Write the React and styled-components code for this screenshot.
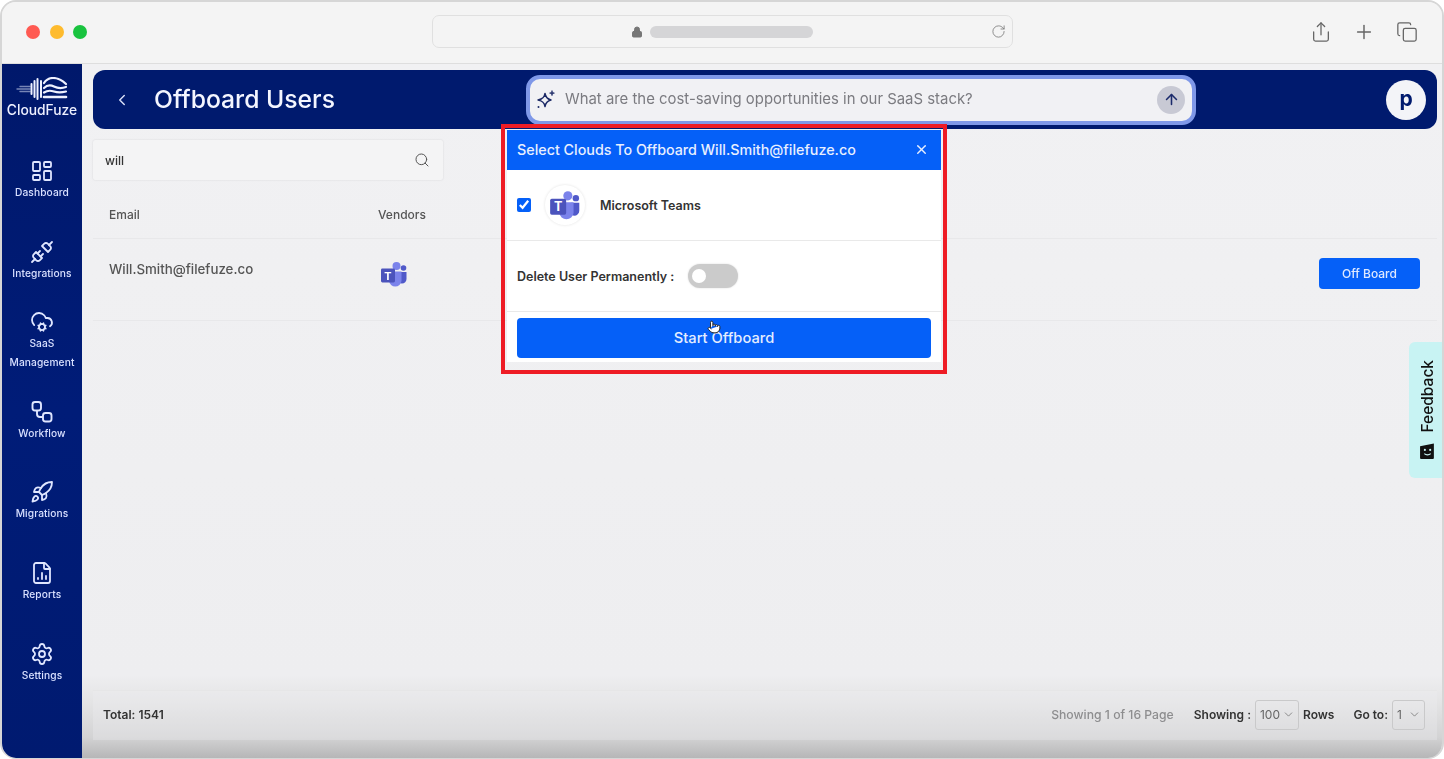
import React from 'react';
import styled, { createGlobalStyle } from 'styled-components';
import {
  ChevronLeft, ChevronDown, Search, X, ArrowUp, Lock, RotateCw, Share, Plus, Copy,
  LayoutDashboard, Unplug, CloudCog, Rocket, FileChartColumn, Settings, Pointer,
} from 'lucide-react';

const Global = createGlobalStyle`
  html, body { margin: 0; padding: 0; background: #fff; }
  * { box-sizing: border-box; }
  body { font-family: Inter, "Noto Sans", "Liberation Sans", sans-serif; }
`;

const Frame = styled.div`
  position: relative;
  width: 1444px;
  height: 759px;
  border: 2px solid #d6d6d6;
  border-bottom-width: 1px;
  border-radius: 16px;
  overflow: hidden;
  display: flex;
  flex-direction: column;
  background: #f3f3f4;
  filter: blur(0.35px);
`;

const Toolbar = styled.header`
  height: 62px;
  flex: none;
  display: flex;
  align-items: center;
  padding: 0 24px 2px 24px;
  background: #f4f4f4;
  border-bottom: 1px solid #dedede;
`;
const Lights = styled.div`
  display: flex;
  gap: 9.5px;
  width: 406px;
`;
const Light = styled.span`
  width: 14px;
  height: 14px;
  border-radius: 50%;
  background: ${p => p.$c};
`;
const Address = styled.div`
  width: 581px;
  height: 33px;
  border: 1px solid #e0e0e0;
  border-radius: 7px;
  background: #f4f4f4;
  display: flex;
  align-items: center;
  padding: 0 6px 0 198px;
  color: #777;
`;
const Skeleton = styled.span`
  width: 163px;
  height: 12px;
  margin-left: 7px;
  border-radius: 6px;
  background: #d5d5d7;
`;
const Reload = styled.span`
  margin-left: auto;
  display: flex;
  color: #777;
`;
const ToolIcons = styled.div`
  margin-left: auto;
  display: flex;
  align-items: center;
  gap: 21px;
  color: #666;
`;

const Body = styled.div`
  position: relative;
  flex: 1;
  min-height: 0;
  display: flex;
`;

const Sidebar = styled.nav`
  width: 80px;
  flex: none;
  background: linear-gradient(#00186b, #001c78 50%, #001a70);
  display: flex;
  flex-direction: column;
  align-items: center;
  padding-top: 13px;
  color: #dfe6ff;
`;
const Logo = styled.div`
  height: 82px;
  display: flex;
  flex-direction: column;
  align-items: center;
  color: #fff;
`;
const LogoText = styled.span`
  font-size: 13.8px;
  font-weight: 500;
  line-height: 16px;
  margin-top: 1px;
  color: #eef1ff;
  white-space: nowrap;
`;
const NavItem = styled.a`
  height: ${p => p.$h}px;
  flex: none;
  width: 100%;
  display: flex;
  flex-direction: column;
  align-items: center;
`;
const NavLabel = styled.span`
  font-size: 10.2px;
  font-weight: 500;
  line-height: 19px;
  text-align: center;
  white-space: pre-line;
  letter-spacing: 0.1px;
  color: #d8e0ff;
`;

const Main = styled.main`
  flex: 1;
  min-width: 0;
  display: flex;
  flex-direction: column;
  padding: 6px 5px 18px 11px;
  background: linear-gradient(#f1f1f3, #eeeef0 88%, #e4e4e5 92%, #d3d3d4 97%, #b6b6b7 100%);
`;
const Header = styled.div`
  height: 59px;
  flex: none;
  border-radius: 12px;
  background: #001a6e;
  display: flex;
  align-items: center;
  padding: 0 11px 0 20px;
  color: #fff;
`;
const BackIcon = styled.span`
  display: flex;
  color: #d5dcf5;
  width: 41px;
`;
const Title = styled.h1`
  margin: -2px 0 0;
  width: 372px;
  font-size: 24.7px;
  font-weight: 500;
  white-space: nowrap;
  color: #f4f6ff;
`;
const Ask = styled.div`
  width: 670px;
  height: 50px;
  border: 4px solid #7f98e8;
  border-radius: 14px;
  background: #f1f1f4;
  display: flex;
  align-items: center;
  padding: 0 7px 0 5px;
  gap: 8px;
`;
const AskText = styled.span`
  margin-top: -2px;
  font-size: 14.9px;
  color: #7b7b80;
  white-space: nowrap;
`;
const AskSend = styled.span`
  margin-left: auto;
  width: 28px;
  height: 28px;
  border-radius: 50%;
  background: #c8c9d4;
  color: #1b2a6b;
  display: flex;
  align-items: center;
  justify-content: center;
`;
const Avatar = styled.span`
  margin-left: auto;
  width: 40px;
  height: 40px;
  border-radius: 50%;
  background: #f3f4f8;
  color: #001a6e;
  font-size: 21px;
  font-weight: 700;
  display: flex;
  align-items: center;
  justify-content: center;
  padding-bottom: 2px;
`;

const SearchBox = styled.div`
  margin-top: 11px;
  width: 350px;
  height: 40px;
  flex: none;
  background: #f4f4f5;
  border-radius: 2px;
  box-shadow: 0 0 2px rgba(0, 0, 0, 0.12);
  display: flex;
  align-items: center;
  justify-content: space-between;
  padding: 0 13px 0 12px;
  font-size: 12px;
  font-weight: 500;
  color: #333;
`;
const Table = styled.section`
  margin-top: 12px;
  flex: 1;
  min-height: 0;
  display: flex;
  flex-direction: column;
`;
const Row = styled.div`
  height: ${p => p.$h}px;
  flex: none;
  display: grid;
  grid-template-columns: 269px 1fr auto;
  align-items: ${p => p.$top ? 'start' : 'center'};
  padding: ${p => p.$top ? '20px 17px 0 16px' : '0 17px 2px 16px'};
  border-bottom: 1px solid #e8e8ea;
`;
const HeadCell = styled.span`
  font-size: 12px;
  font-weight: 500;
  color: #555;
`;
const EmailCell = styled.span`
  font-size: 13.3px;
  font-weight: 500;
  color: #555;
  line-height: 20px;
`;
const TeamsCell = styled.span`
  display: flex;
  margin: 1px 0 0 2px;
`;
const OffBoard = styled.button`
  width: 101px;
  height: 31px;
  margin-top: -1px;
  border: 0;
  border-radius: 4px;
  background: #0560f8;
  color: #dfe9ff;
  font: 500 12px Inter, sans-serif;
`;
const Spacer = styled.div`
  flex: 1;
`;
const Footer = styled.footer`
  height: 50px;
  flex: none;
  display: flex;
  align-items: center;
  padding: 0 8px 2px 10px;
  background: rgba(240, 240, 241, 0.3);
  border-top: 1px solid #e6e6e7;
  font-size: 12px;
  font-weight: 600;
  color: #333;
`;
const Pager = styled.div`
  margin-left: auto;
  display: flex;
  align-items: center;
`;
const PageInfo = styled.span`
  font-size: 12.2px;
  font-weight: 500;
  color: #8d8d8f;
  margin-right: 20px;
`;
const Select = styled.span`
  width: ${p => p.$w}px;
  height: 30px;
  margin: 0 4px;
  border: 1px solid #c9c9ca;
  border-radius: 3px;
  display: flex;
  align-items: center;
  justify-content: space-between;
  padding: 0 3px 0 4px;
  font-weight: 400;
  color: #666;
`;
const GoTo = styled.span`
  margin-left: 19px;
`;

const Callout = styled.div`
  position: absolute;
  left: 499px;
  top: 60px;
  width: 446px;
  height: 250px;
  border: 4px solid #ee1c25;
  padding: 2px;
`;
const Modal = styled.div`
  width: 434px;
  height: 232px;
  background: #fff;
  display: flex;
  flex-direction: column;
`;
const ModalHead = styled.div`
  height: 40px;
  flex: none;
  background: #0560f8;
  color: #e8efff;
  display: flex;
  align-items: center;
  justify-content: space-between;
  padding: 0 12px 2px 10px;
  font-size: 14.3px;
  font-weight: 500;
`;
const CloudRow = styled.div`
  height: 71px;
  flex: none;
  display: flex;
  align-items: center;
  padding: 0 10px;
  border-bottom: 1px solid #e9e9e9;
  font-size: 12.5px;
  font-weight: 600;
  color: #333;
`;
const Check = styled.input`
  width: 14px;
  height: 14px;
  margin: 0 14px 0 0;
  accent-color: #0560f8;
`;
const LogoCircle = styled.span`
  width: 40px;
  height: 40px;
  border-radius: 50%;
  box-shadow: 0 0 3px rgba(0, 0, 0, 0.12);
  display: flex;
  align-items: center;
  justify-content: center;
  margin-right: 15px;
`;
const DeleteLabel = styled.span`
  width: 171px;
  white-space: nowrap;
`;
const Toggle = styled.span`
  width: 50px;
  height: 24px;
  border-radius: 12px;
  background: #cbcbcb;
  box-shadow: 0 0 2px rgba(0, 0, 0, 0.15);
  display: flex;
  align-items: center;
  padding-left: 4px;
`;
const Knob = styled.span`
  width: 14px;
  height: 14px;
  border-radius: 50%;
  background: #fff;
`;
const StartWrap = styled.div`
  padding: 6px 10px 0;
`;
const Start = styled.button`
  width: 100%;
  height: 40px;
  border: 0;
  border-radius: 4px;
  background: #0560f8;
  color: #e4edff;
  font: 500 14.7px Inter, sans-serif;
`;
const Cursor = styled.span`
  position: absolute;
  left: 202px;
  top: 192px;
  display: flex;
  color: #222;
`;
const FeedbackTab = styled.div`
  position: absolute;
  right: 0;
  top: 278px;
  width: 33px;
  height: 136px;
  padding-left: 3px;
  background: #c8f3f3;
  border-radius: 6px 0 0 6px;
  display: flex;
  flex-direction: column-reverse;
  align-items: center;
  justify-content: center;
  gap: 10px;
  color: #111;
`;
const FeedbackText = styled.span`
  writing-mode: vertical-rl;
  transform: rotate(180deg);
  font: 500 15.5px Inter, sans-serif;
`;

const TeamsIcon = ({ size = 28 }) => (
  <svg width={size} height={size} viewBox="0 0 28 28">
    <circle cx="16.5" cy="6" r="4" fill="#7b83eb" />
    <circle cx="23.5" cy="8" r="2.8" fill="#5059c9" />
    <path d="M19 12h7.5v7a4.5 4.5 0 0 1-4.5 4.5 4 4 0 0 1-3-1.3z" fill="#5059c9" />
    <path d="M9 11.5h12.5V21a6.3 6.3 0 0 1-12.5 0z" fill="#7b83eb" />
    <rect x="1" y="8.5" width="14" height="14" rx="1.4" fill="#4b53bc" />
    <text x="8" y="19.5" textAnchor="middle" fontSize="11" fontWeight="700" fill="#fff" fontFamily="Inter, sans-serif">T</text>
  </svg>
);

const LogoMark = () => (
  <svg width="52" height="24" viewBox="0 0 52 24" fill="none" stroke="#eef1ff" strokeLinecap="round">
    <path d="M1 12h13M4 9.5h10M4 14.5h10" strokeWidth="1.4" opacity=".5" />
    <path d="M15.5 7v10M18.5 4v16M21.5 2v20M25 4v16" strokeWidth="2" />
    <path d="M28 6c2-3 5-5 9-5 4 0 9 2 13 6" strokeWidth="2.2" />
    <path d="M28 11c3-3 7-3 10-1.5s8 2 12 .5" strokeWidth="2.2" />
    <path d="M28 15.5c3-2 7-2 10-1s8 1 12 0" strokeWidth="2.2" />
    <path d="M28 20h22" strokeWidth="2.6" />
  </svg>
);

const Sparkle = () => (
  <svg width="22" height="22" viewBox="0 0 22 22" fill="none" stroke="#1d2a66" strokeWidth="1.5" strokeLinejoin="round">
    <path d="M10 4.5c.7 4 2.2 5.6 6 6.5-3.8.9-5.3 2.5-6 6.5-.7-4-2.2-5.6-7-6.5 4.8-.9 6.3-2.5 7-6.5z" />
    <path d="M17 1.5l.6 2 1.9.6-1.9.6-.6 2-.6-2-1.9-.6 1.9-.6z" fill="#1d2a66" strokeWidth=".6" />
    <circle cx="3.5" cy="18" r="1" fill="#1d2a66" stroke="none" />
  </svg>
);

const WorkflowIcon = () => (
  <svg width="24" height="24" viewBox="0 0 24 24" fill="none" stroke="currentColor" strokeWidth="1.9" strokeLinejoin="round">
    <rect x="2.5" y="2" width="8.5" height="8.5" rx="2.5" />
    <rect x="13" y="13" width="8.5" height="8.5" rx="2.5" />
    <path d="M7 10.5V14a3 3 0 0 0 3 3h3" />
  </svg>
);

const nav = [
  { label: 'Dashboard', h: 81, icon: <LayoutDashboard size={24} strokeWidth={1.8} /> },
  { label: 'Integrations', h: 70, icon: <Unplug size={24} strokeWidth={1.8} /> },
  { label: 'SaaS\nManagement', h: 90, icon: <CloudCog size={24} strokeWidth={1.8} /> },
  { label: 'Workflow', h: 80, icon: <WorkflowIcon /> },
  { label: 'Migrations', h: 81, icon: <Rocket size={24} strokeWidth={1.8} /> },
  { label: 'Reports', h: 81, icon: <FileChartColumn size={24} strokeWidth={1.8} /> },
  { label: 'Settings', h: 80, icon: <Settings size={24} strokeWidth={1.8} /> },
];

export default function App() {
  return (
    <>
      <Global />
      <Frame>
        <Toolbar>
          <Lights>
            <Light $c="#ff5a52" />
            <Light $c="#febb2e" />
            <Light $c="#19c33f" />
          </Lights>
          <Address>
            <Lock size={12} fill="#777" strokeWidth={2} />
            <Skeleton />
            <Reload><RotateCw size={15} strokeWidth={1.3} /></Reload>
          </Address>
          <ToolIcons>
            <Share size={22} strokeWidth={1.4} />
            <Plus size={22} strokeWidth={1.6} />
            <Copy size={22} strokeWidth={1.4} />
          </ToolIcons>
        </Toolbar>
        <Body>
          <Sidebar>
            <Logo>
              <LogoMark />
              <LogoText>CloudFuze</LogoText>
            </Logo>
            {nav.map(n => (
              <NavItem key={n.label} $h={n.h}>
                {n.icon}
                <NavLabel>{n.label}</NavLabel>
              </NavItem>
            ))}
          </Sidebar>
          <Main>
            <Header>
              <BackIcon><ChevronLeft size={18} /></BackIcon>
              <Title>Offboard Users</Title>
              <Ask>
                <Sparkle />
                <AskText>What are the cost-saving opportunities in our SaaS stack?</AskText>
                <AskSend><ArrowUp size={17} strokeWidth={2.2} /></AskSend>
              </Ask>
              <Avatar>p</Avatar>
            </Header>
            <SearchBox>
              will
              <Search size={16} strokeWidth={1.5} color="#555" />
            </SearchBox>
            <Table>
              <Row $h={47}>
                <HeadCell>Email</HeadCell>
                <HeadCell>Vendors</HeadCell>
              </Row>
              <Row $h={82} $top>
                <EmailCell>Will.Smith@filefuze.co</EmailCell>
                <TeamsCell><TeamsIcon size={28} /></TeamsCell>
                <OffBoard>Off Board</OffBoard>
              </Row>
              <Spacer />
              <Footer>
                Total: 1541
                <Pager>
                  <PageInfo>Showing 1 of 16 Page</PageInfo>
                  Showing :
                  <Select $w={44}>100 <ChevronDown size={13} strokeWidth={1.3} /></Select>
                  Rows
                  <GoTo>Go to:</GoTo>
                  <Select $w={33}>1 <ChevronDown size={13} strokeWidth={1.3} /></Select>
                </Pager>
              </Footer>
            </Table>
          </Main>
          <Callout>
            <Modal>
              <ModalHead>
                Select Clouds To Offboard Will.Smith@filefuze.co
                <X size={15} strokeWidth={2.2} />
              </ModalHead>
              <CloudRow>
                <Check type="checkbox" defaultChecked readOnly />
                <LogoCircle><TeamsIcon size={32} /></LogoCircle>
                Microsoft Teams
              </CloudRow>
              <CloudRow>
                <DeleteLabel>Delete User Permanently :</DeleteLabel>
                <Toggle><Knob /></Toggle>
              </CloudRow>
              <StartWrap>
                <Start>Start Offboard</Start>
              </StartWrap>
            </Modal>
            <Cursor><Pointer size={14} fill="#fff" strokeWidth={1.6} /></Cursor>
          </Callout>
          <FeedbackTab>
            <svg width="17" height="17" viewBox="0 0 16 16">
              <path d="M1 3l13-2.5V14a1 1 0 0 1-1 1H2a1 1 0 0 1-1-1z" fill="#111" />
              <circle cx="5.5" cy="6.5" r="1" fill="#c8f3f3" />
              <circle cx="10.5" cy="6.5" r="1" fill="#c8f3f3" />
              <path d="M5 10c1.5 1.6 4.5 1.6 6 0" stroke="#c8f3f3" fill="none" />
            </svg>
            <FeedbackText>Feedback</FeedbackText>
          </FeedbackTab>
        </Body>
      </Frame>
    </>
  );
}
